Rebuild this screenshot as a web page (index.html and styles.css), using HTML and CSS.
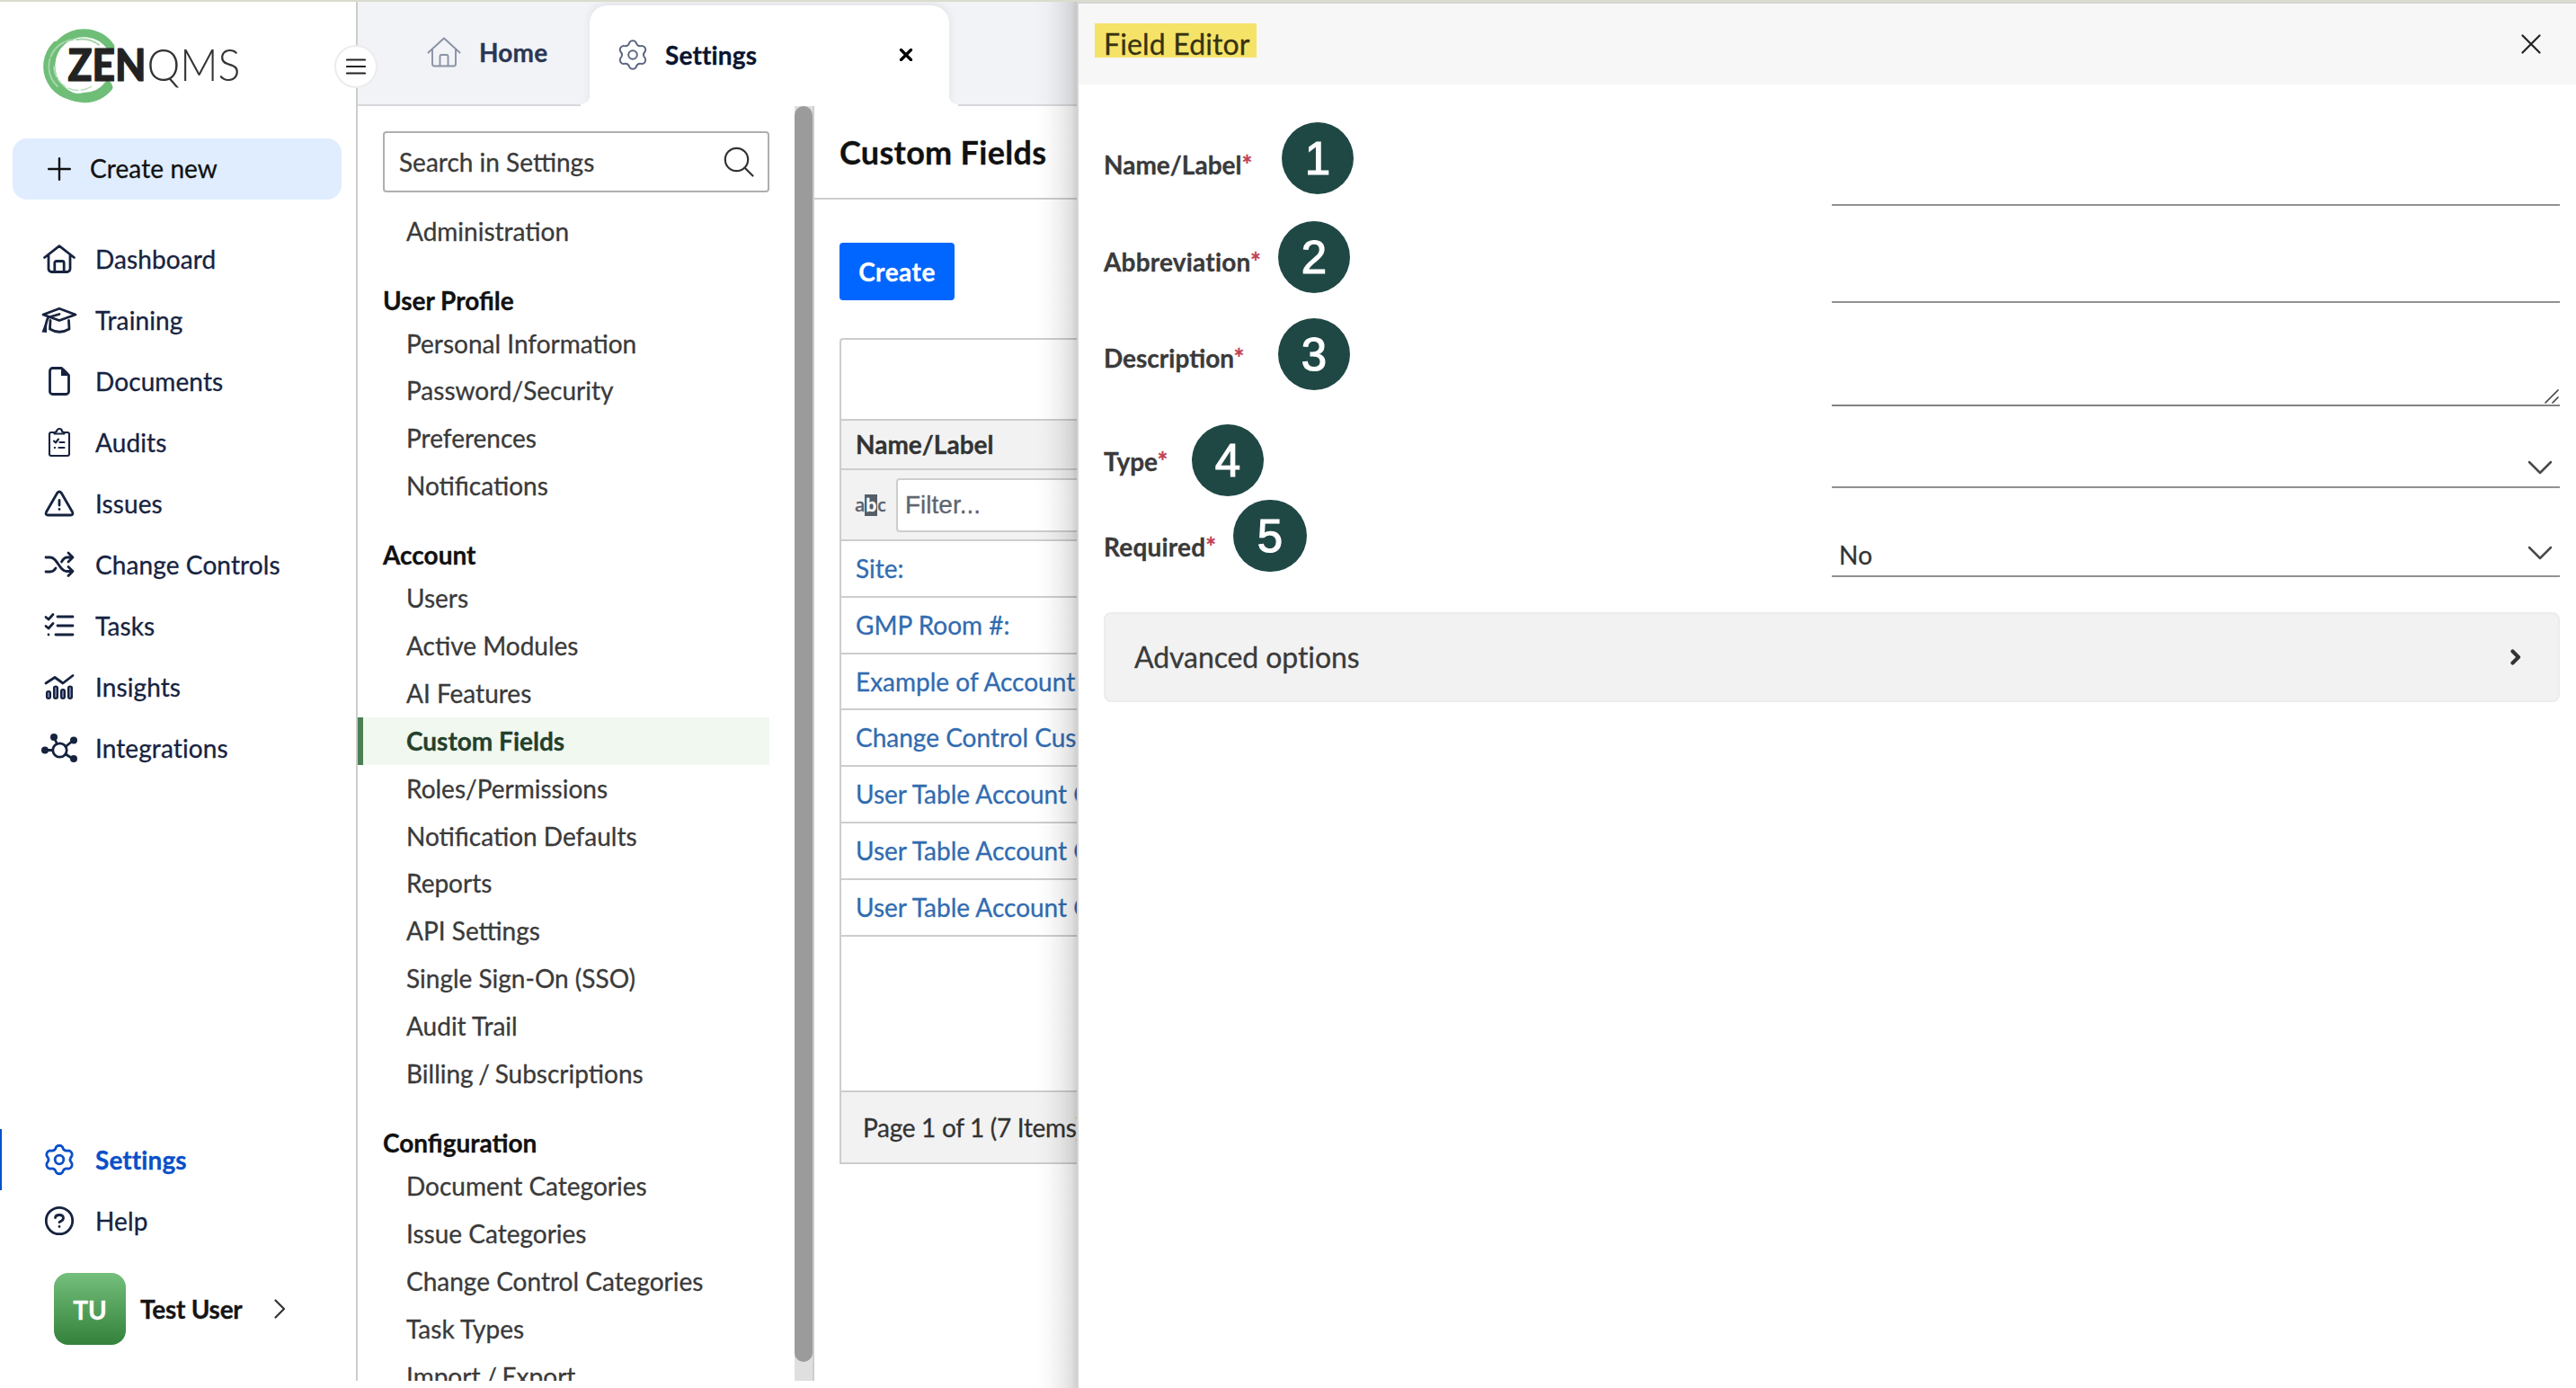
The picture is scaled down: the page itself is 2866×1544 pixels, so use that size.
FILE: index.html
```html
<!DOCTYPE html>
<html lang="en">
<head>
<meta charset="utf-8">
<title>ZenQMS - Custom Fields</title>
<link rel="stylesheet" href="styles.css">
</head>
<body>
<svg class="defs" width="0" height="0" aria-hidden="true">
  <symbol id="gear" viewBox="0 0 40 40">
    <path d="M16.500 5.900A4.500 4.500 0 0 1 23.500 5.900Q25 11.300 30.400 9.900A4.500 4.500 0 0 1 33.900 16Q30 20 33.900 24A4.500 4.500 0 0 1 30.400 30.100Q25 28.700 23.500 34.100A4.500 4.500 0 0 1 16.500 34.100Q15 28.700 9.600 30.100A4.500 4.500 0 0 1 6.100 24Q10 20 6.100 16A4.500 4.500 0 0 1 9.600 9.900Q15 11.300 16.500 5.900Z"/>
    <circle cx="20" cy="20" r="4.800"/>
  </symbol>
</svg>
<div class="app">
  <aside class="sidebar">
    <div class="logo">
      <svg width="236" height="90" viewBox="40 28 236 90">
        <path d="M121 97A36.500 36.500 0 1 1 123 52" fill="none" stroke="#6fbe78" stroke-width="9"/>
        <path d="M62 50A34 34 0 0 0 94 107Q112 106 120 94" fill="none" stroke="#6fbe78" stroke-width="8"/>
        <path d="M64 96A30 30 0 0 1 86 44Q100 42 110 50" fill="none" stroke="#a5d6aa" stroke-width="2" stroke-dasharray="22 2 9 3"/>
        <path d="M60 74A27 27 0 0 0 102 96" fill="none" stroke="#b9dfbd" stroke-width="1.500" stroke-dasharray="12 3"/>
        <text x="75.500" y="89.500" class="logo-bold" textLength="87" lengthAdjust="spacingAndGlyphs">ZEN</text>
        <text x="163.500" y="89.500" class="logo-thin" textLength="104" lengthAdjust="spacingAndGlyphs">QMS</text>
      </svg>
    </div>
    <button class="create-new">
      <svg width="26" height="26" viewBox="0 0 26 26"><path d="M13 1.200V24.800M1.200 13H24.800"/></svg>
      <span>Create new</span>
    </button>
    <nav class="nav">
      <a class="nav-item"><svg class="icon" viewBox="0 0 40 40"><path d="M3.500 18.500L20 5.700L36.500 18.500M8 16V31a3.500 3.500 0 0 0 3.500 3.500H28.500A3.500 3.500 0 0 0 32 31V16M14.800 34V24.500a2 2 0 0 1 2-2h6.400a2 2 0 0 1 2 2V34"/></svg><span>Dashboard</span></a>
      <a class="nav-item"><svg class="icon" viewBox="0 0 40 40"><path d="M2 14L20 7.300L38 14L20 20.500ZM10 20.500L9.500 30Q20 36.500 31 30L30.500 20.500M20 13.500L8 17Q6 19 4.500 28"/><path class="solid" d="M.500 33.500L3.500 25.500L6 26V34Z"/></svg><span>Training</span></a>
      <a class="nav-item"><svg class="icon" viewBox="0 0 40 40"><path d="M22.500 5.500H12.500A3 3 0 0 0 9.500 8.500V31.500A3 3 0 0 0 12.500 34.500H27.500A3 3 0 0 0 30.500 31.500V13.500Z"/><path class="solid" d="M22 5V14H31L30 11L25 6Z"/></svg><span>Documents</span></a>
      <a class="nav-item"><svg class="icon" viewBox="0 0 40 40"><path class="mid" d="M15 9H11a2 2 0 0 0-2 2V33a2 2 0 0 0 2 2H29a2 2 0 0 0 2-2V11a2 2 0 0 0-2-2H25M14.500 10.500Q14.500 8.500 17 8A3 3 0 0 1 23 8Q25.500 8.500 25.500 10.500ZM14 18.500L16 20.500L19 16.500M20.500 20H25.500M19.500 26H25.500M14.800 26h.400"/></svg><span>Audits</span></a>
      <a class="nav-item"><svg class="icon" viewBox="0 0 40 40"><path d="M17.500 8.700Q20 5.300 22.500 8.700L34.500 29.500Q36 33 32.500 33H7.500Q4 33 5.500 29.500ZM20 16.500V22M20 26.500V26.600"/></svg><span>Issues</span></a>
      <a class="nav-item"><svg class="icon" viewBox="0 0 40 40"><path d="M5 12H10C18 12 20 27.500 28 27.500H35M5 28H10Q13.500 28 16 24M22.500 17Q25 12 29 12H35M30 7L35 12L30 17M30 22.500L35 27.500L30 32.500"/></svg><span>Change Controls</span></a>
      <a class="nav-item"><svg class="icon" viewBox="0 0 40 40"><path d="M5 10.500L8 13L13 7.500M5 20.500L8 23L13 17.500M18 10H35M18 20H35M16 30H35M8 30V30.100"/></svg><span>Tasks</span></a>
      <a class="nav-item"><svg class="icon" viewBox="0 0 40 40"><path d="M5 16L15 9.500L24 16L35 7.500"/><g class="bars"><rect x="6" y="25" width="4" height="8" rx="2"/><rect x="14" y="19.500" width="4" height="13.500" rx="2"/><rect x="22" y="23" width="4" height="10" rx="2"/><rect x="30" y="19.500" width="4" height="13.500" rx="2"/></g></svg><span>Insights</span></a>
      <a class="nav-item"><svg class="icon" viewBox="0 0 40 40"><circle cx="20.500" cy="22.500" r="7.700"/><path d="M4 22.500H12M14 8L17.500 15.500M27 18.500L35 12M27 27L35 32"/><g class="solid"><circle cx="4" cy="22.500" r="4"/><circle cx="14" cy="8" r="4"/><circle cx="36" cy="11.500" r="4"/><circle cx="36" cy="32" r="4"/></g></svg><span>Integrations</span></a>
    </nav>
    <nav class="nav nav-bottom">
      <a class="nav-item active"><svg class="icon"><use href="#gear"/></svg><span>Settings</span></a>
      <a class="nav-item"><svg class="icon" viewBox="0 0 40 40"><circle cx="20" cy="20" r="14.700"/><path d="M15.500 16.500Q16 13.500 20 13.500Q24.500 13.500 24.500 17Q24.500 19.500 20 21.500M20 26.500V26.600"/></svg><span>Help</span></a>
    </nav>
    <div class="user">
      <span class="avatar">TU</span>
      <span class="user-name">Test User</span>
      <svg width="14" height="22" viewBox="0 0 14 22"><path d="M2.500 1.500L12 11L2.500 20.500"/></svg>
    </div>
    <button class="menu-toggle"><svg width="22" height="18" viewBox="0 0 22 18"><path d="M1 1.500H21M1 9H21M1 16.500H21"/></svg></button>
  </aside>

  <div class="workspace">
    <div class="tabs">
      <a class="tab home"><svg class="tab-icon" viewBox="0 0 40 40"><path d="M2.500 20.500L20 4.500L37.500 20.500M7 17V33a2.500 2.500 0 0 0 2.500 2.500H30.500A2.500 2.500 0 0 0 33 33V17M15.500 35V24.500a1.500 1.500 0 0 1 1.500-1.500h6a1.500 1.500 0 0 1 1.500 1.500V35"/></svg><span>Home</span></a>
      <a class="tab current"><svg class="tab-icon"><use href="#gear"/></svg><span>Settings</span><svg class="tab-close" width="16" height="14" viewBox="0 0 16 14"><path d="M2.500 1.500L13.500 12.500M13.500 1.500L2.500 12.500"/></svg></a>
    </div>
    <div class="content">
      <div class="settings-nav">
        <div class="search"><span>Search in Settings</span><svg width="34" height="34" viewBox="0 0 34 34"><circle cx="14.500" cy="14.500" r="12.700"/><path d="M23.500 23.500L32.500 32.500"/></svg></div>
        <ul class="links first"><li>Administration</li></ul>
        <h3>User Profile</h3>
        <ul class="links"><li>Personal Information</li><li>Password/Security</li><li>Preferences</li><li>Notifications</li></ul>
        <h3>Account</h3>
        <ul class="links"><li>Users</li><li>Active Modules</li><li>AI Features</li><li class="selected">Custom Fields</li><li>Roles/Permissions</li><li>Notification Defaults</li><li>Reports</li><li>API Settings</li><li>Single Sign-On (SSO)</li><li>Audit Trail</li><li class="tight">Billing / Subscriptions</li></ul>
        <h3>Configuration</h3>
        <ul class="links"><li>Document Categories</li><li>Issue Categories</li><li>Change Control Categories</li><li>Task Types</li><li class="tight">Import / Export</li></ul>
      </div>
      <div class="scrollbar"><div class="thumb"></div></div>
      <main class="main">
        <h1>Custom Fields</h1>
        <div class="panel">
          <button class="create">Create</button>
          <div class="grid">
            <div class="grid-toolbar"></div>
            <div class="grid-head">Name/Label</div>
            <div class="grid-filter"><span class="abc">a<b>b</b>c</span><div class="filter-input">Filter...</div></div>
            <a class="grid-row">Site:</a>
            <a class="grid-row">GMP Room #:</a>
            <a class="grid-row">Example of Account</a>
            <a class="grid-row">Change Control Custom</a>
            <a class="grid-row">User Table Account Custom</a>
            <a class="grid-row">User Table Account Custom</a>
            <a class="grid-row">User Table Account Custom</a>
            <div class="grid-empty"></div>
            <div class="grid-pager">Page 1 of 1 (7 Items)</div>
          </div>
        </div>
      </main>
    </div>
  </div>
</div>

<section class="drawer">
  <header class="drawer-head">
    <h2>Field Editor</h2>
    <svg width="22" height="22" viewBox="0 0 22 22"><path d="M1.500 1.500L20.500 20.500M20.500 1.500L1.500 20.500"/></svg>
  </header>
  <form class="form">
    <div class="row r1"><label>Name/Label<i>*</i></label><div class="field"></div><span class="badge">1</span></div>
    <div class="row r2"><label>Abbreviation<i>*</i></label><div class="field"></div><span class="badge">2</span></div>
    <div class="row r3"><label>Description<i>*</i></label><div class="field area"><svg width="16" height="16" viewBox="0 0 16 16"><path d="M1 15L15 1M9 15L15 9"/></svg></div><span class="badge">3</span></div>
    <div class="row r4"><label>Type<i>*</i></label><div class="field select"><svg width="28" height="16" viewBox="0 0 28 16"><path d="M2 2L14 14L26 2"/></svg></div><span class="badge">4</span></div>
    <div class="row r5"><label>Required<i>*</i></label><div class="field select"><span>No</span><svg width="28" height="16" viewBox="0 0 28 16"><path d="M2 2L14 14L26 2"/></svg></div><span class="badge">5</span></div>
    <div class="advanced"><span>Advanced options</span><svg width="12" height="18" viewBox="0 0 12 18"><path d="M2.500 2.500L9 9L2.500 15.500"/></svg></div>
  </form>
</section>
</body>
</html>
```
FILE: styles.css
```css
* { box-sizing: border-box; }
body {
  margin: 0;
  height: 1544px;
  overflow: hidden;
  position: relative;
  background: #fff;
  border-top: 2px solid #dadccd;
  font-family: "Lato", sans-serif;
  font-size: 28px;
  line-height: 34px;
  color: #3a3a3a;
  -webkit-text-stroke: .3px;
}
h1, h2, h3, ul { margin: 0; padding: 0; list-style: none; }
button { border: 0; font: inherit; text-align: left; }
svg { display: block; flex: none; fill: none; stroke: currentColor; stroke-linecap: round; stroke-linejoin: round; }
.defs { position: absolute; }
.app { display: flex; height: 1534px; }

/* Primary sidebar */
.sidebar {
  position: relative;
  z-index: 2;
  flex: none;
  width: 398px;
  display: flex;
  flex-direction: column;
  border-right: 2px solid #cdcdcd;
  background: #fff;
}
.logo { height: 152px; padding: 26px 0 0 40px; }
.logo text { fill: #222; stroke: none; font-size: 50px; }
.logo text.logo-bold { font-weight: 900; stroke: #222; stroke-width: 1.200px; }
.logo text.logo-thin { font-weight: 300; fill: #333; }
.create-new {
  display: flex;
  align-items: center;
  gap: 21px;
  width: 366px;
  height: 68px;
  margin-left: 14px;
  padding: 0 0 0 39px;
  border-radius: 16px;
  background: #e0edff;
  color: #111;
}
.create-new svg { stroke-width: 2.400; }
.create-new span { padding-bottom: 2px; letter-spacing: .1px; }
.nav { margin-top: 32px; }
.nav-item {
  display: flex;
  align-items: center;
  gap: 20px;
  height: 68px;
  padding-left: 46px;
  color: #16233f;
  letter-spacing: .1px;
}
.icon { width: 40px; height: 40px; stroke-width: 2.800; overflow: visible; }
.icon .solid { fill: currentColor; stroke: none; }
.icon .mid { stroke-width: 2.100; }
.icon .bars { stroke-width: 2.100; fill: #6f7fa3; }
.nav-bottom { margin-top: auto; }
.nav-item.active { padding-left: 44px; border-left: 2px solid #0052cc; color: #0a4fc8; font-weight: 700; }
.user { display: flex; align-items: center; margin: 24px 0 40px 60px; color: #151515; font-weight: 700; }
.avatar {
  width: 80px;
  height: 80px;
  border-radius: 16px;
  background: linear-gradient(#73bf7b, #34813b);
  color: #fff;
  line-height: 82px;
  text-align: center;
}
.user-name { width: 149px; padding-left: 16px; letter-spacing: -.25px; white-space: nowrap; }
.user svg { margin-left: 15px; stroke-width: 2.200; color: #333; }
.menu-toggle {
  position: absolute;
  left: 372px;
  top: 48px;
  display: flex;
  align-items: center;
  justify-content: center;
  width: 48px;
  height: 48px;
  padding: 0;
  border: 2px solid #ececee;
  border-radius: 50%;
  background: #fff;
  color: #222;
}
.menu-toggle svg { stroke-width: 2.100; }

/* Tabs */
.workspace { flex: 1; display: flex; flex-direction: column; min-width: 0; }
.tabs { display: flex; height: 116px; background: linear-gradient(#d6d8db, #d6d8db) 0 100% / 100% 2px no-repeat #f2f3f6; }
.tab { display: flex; align-items: center; font-weight: 700; letter-spacing: .15px; }
.tab-icon { width: 40px; height: 40px; stroke-width: 2; color: #5c6880; }
.tab.home { width: 258px; padding: 0 0 4px 76px; gap: 19px; color: #2b3754; }
.tab.home .tab-icon { color: #8a93a5; stroke-width: 1.900; }
.tab.current {
  position: relative;
  width: 400px;
  height: 112px;
  margin-top: 4px;
  padding: 0 0 2px 28px;
  border-radius: 20px 20px 0 0;
  background: #fff;
  box-shadow: 0 -2px 8px rgba(40, 50, 80, .09);
  clip-path: inset(-6px -12px 0 -12px);
  color: #0a1430;
}
.tab.current::before, .tab.current::after { content: ""; position: absolute; bottom: 0; width: 10px; height: 12px; }
.tab.current::before { left: -10px; background: radial-gradient(circle at 0 0, transparent 10px, #fff 10.500px); }
.tab.current::after { right: -10px; background: radial-gradient(circle at 100% 0, transparent 10px, #fff 10.500px); }
.tab.current span { margin-left: 16px; }
.tab-close { margin-left: auto; margin-right: 40px; stroke-width: 3.200; color: #000; }

/* Settings navigation */
.content { flex: 1; display: flex; min-height: 0; }
.settings-nav { width: 486px; flex: none; padding-top: 28px; overflow: hidden; }
.search {
  display: flex;
  align-items: center;
  justify-content: space-between;
  width: 430px;
  height: 68px;
  margin-left: 28px;
  padding: 0 15px 0 16px;
  border: 2px solid #afafaf;
  border-radius: 4px;
  color: #3a3a3a;
}
.search svg { stroke-width: 2.200; color: #333; }
.links li { width: 458px; height: 52.900px; padding-left: 54px; line-height: 53px; }
.links .tight { word-spacing: -1.500px; }
.links.first { margin-top: 16.700px; }
.links .selected { padding-left: 48px; border-left: 6px solid #4c7f53; background: #f0f8f0; color: #24402a; font-weight: 700; }
.settings-nav h3 { height: 72px; padding: 33px 0 0 28px; color: #111; font-size: 28px; font-weight: 700; }
.scrollbar { flex: none; width: 22px; border-right: 2px solid #cdcdcd; background: #dfdfdf; }
.thumb { height: 1397px; border-radius: 10px; background: #9b9b9b; }

/* Custom fields list */
.main { flex: 1; min-width: 0; }
.main h1 {
  height: 104px;
  padding: 30px 0 0 28px;
  border-bottom: 2px solid #cdcdcd;
  color: #111;
  font-size: 36px;
  line-height: 43px;
  font-weight: 700;
  letter-spacing: .3px;
}
.panel { padding: 48px 0 0 28px; }
.create {
  display: block;
  width: 128px;
  height: 64px;
  padding: 0;
  border-radius: 4px;
  background: #0066ff;
  color: #fff;
  font-weight: 700;
  letter-spacing: .5px;
  text-align: center;
}
.grid { margin-top: 42px; border: 2px solid #cdcdcd; border-right: 0; border-radius: 4px 0 0 0; }
.grid-toolbar { height: 90px; border-bottom: 2px solid #cdcdcd; }
.grid-head { height: 55px; padding: 9px 0 0 16px; border-bottom: 2px solid #cdcdcd; background: #f2f2f2; font-weight: 700; color: #333; }
.grid-filter { display: flex; align-items: center; gap: 13px; height: 79px; padding-left: 15px; border-bottom: 2px solid #cdcdcd; background: #f2f2f2; }
.abc { display: flex; align-items: center; justify-content: space-between; width: 33px; color: #5a646e; font: 500 20px/24px "Noto Sans", sans-serif; letter-spacing: -.5px; }
.abc b { padding: 0 1px; background: #545e68; color: #fff; font-weight: 600; }
.filter-input {
  flex: 1;
  height: 60px;
  padding-left: 8px;
  border: 2px solid #cdcdcd;
  border-radius: 4px;
  background: #fff;
  color: #5f666d;
  font-family: "Liberation Sans", Arial, sans-serif;
  line-height: 55px;
}
.grid-row { display: block; height: 62.800px; padding-left: 16px; border-bottom: 2px solid #cdcdcd; color: #316cb0; line-height: 61px; white-space: nowrap; }
.grid-empty { height: 173px; border-bottom: 2px solid #cdcdcd; }
.grid-pager { height: 78px; padding-left: 24px; background: #f2f2f2; color: #333; line-height: 78px; letter-spacing: -.3px; }

/* Field editor drawer */
.drawer {
  position: absolute;
  z-index: 5;
  top: 0;
  right: 0;
  width: 1668px;
  height: 1542px;
  border: 2px solid #d4d5d5;
  border-width: 2px 0 0 2px;
  background: #fff;
}
.drawer::before {
  content: "";
  position: absolute;
  top: -2px;
  bottom: 0;
  left: -48px;
  width: 46px;
  background: linear-gradient(to right, rgba(0, 0, 0, 0), rgba(0, 0, 0, .02) 30%, rgba(0, 0, 0, .07) 65%, rgba(0, 0, 0, .12) 87%, rgba(0, 0, 0, .19));
}
.drawer-head { display: flex; justify-content: space-between; height: 90px; padding: 22px 39px 0 18px; background: #f7f7f7; }
.drawer-head h2 {
  width: 180px;
  height: 38px;
  padding-left: 10px;
  background: #f5e368;
  color: #363211;
  font-size: 32px;
  font-weight: 400;
  line-height: 46px;
  letter-spacing: .15px;
  white-space: nowrap;
}
.drawer-head svg { margin-top: 12px; stroke-width: 2.200; color: #222; }
.form { padding: 0 18px 0 28px; }
.row { position: relative; display: flex; }
.row label { width: 810px; padding-top: 44px; font-weight: 700; white-space: nowrap; }
.row label i { position: relative; top: -1px; color: #c04152; font-style: normal; }
.field { width: 810px; border-bottom: 2px solid #919191; }
.area { display: flex; justify-content: flex-end; align-items: flex-end; border-color: #828282; }
.area svg { margin: 0 1px 1px 0; stroke-width: 1.700; color: #444; }
.select { display: flex; justify-content: flex-end; align-items: flex-end; padding: 0 8px 13px; }
.select span { margin-right: auto; margin-bottom: -6px; color: #333; letter-spacing: .3px; }
.select svg { stroke-width: 2.500; color: #4a4a4a; }
.badge {
  position: absolute;
  width: 80px;
  height: 80px;
  border-radius: 50%;
  background: #1f4845;
  color: #fff;
  font: 51px/81px "Liberation Sans", Arial, sans-serif;
  text-align: center;
  -webkit-text-stroke: 1.200px #fff;
}
.r1 { height: 135px; }
.r1 label { padding-top: 72px; }
.r1 .badge { left: 198px; top: 42px; }
.r2 { height: 108px; }
.r2 label { padding-top: 45px; letter-spacing: .2px; }
.r2 .badge { left: 194px; top: 17px; }
.r3 { height: 115px; }
.r3 .badge { left: 194px; top: 17px; }
.r4 { height: 91px; }
.r4 .badge { left: 98px; top: 20px; }
.r5 { height: 99px; }
.r5 label { padding-top: 48px; letter-spacing: .2px; }
.r5 .select { padding-bottom: 17px; }
.r5 .select span { margin-bottom: -11px; }
.r5 .badge { left: 144px; top: 13px; width: 82px; border-radius: 40px; }
.advanced {
  display: flex;
  align-items: center;
  justify-content: space-between;
  height: 100px;
  margin-top: 39px;
  padding: 0 41px 0 32px;
  border: 2px solid #ececec;
  border-radius: 8px;
  background: #f2f2f2;
  font-size: 32px;
  letter-spacing: -.1px;
}
.advanced svg { stroke-width: 4.200; color: #333; }
```
